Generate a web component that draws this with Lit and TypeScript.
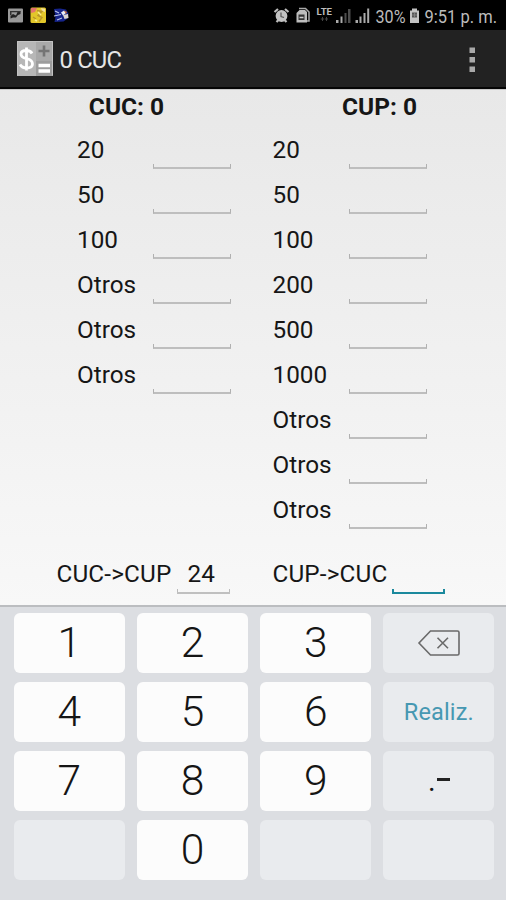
import { LitElement, html, css } from "lit";
import { customElement, property } from "lit/decorators.js";

@customElement("status-bar")
class StatusBar extends LitElement {
  static styles = css`
    :host { display: flex; height: 30px; background: #000; }
    svg { display: block; }
    text { font-family: Roboto, sans-serif; font-size: 18px; fill: #bcbcbc; }
    .lte { font-size: 8.5px; font-weight: 700; }
  `;
  render() {
    return html`<svg width="506" height="30" viewBox="0 0 506 30">
      <g>
        <rect x="8" y="8.500" width="15" height="14" rx="1" fill="#999"/>
        <path d="M10.500 18.500V16l2.500-2 3 1.500 1.500-3.500 3-1V14l-2.500 1-2 2.500h-3z" fill="#222"/>
        <path d="M10 11h10.500v1.300H11.500v3H10z" fill="#333"/>
      </g>
      <g>
        <rect x="30.500" y="7.500" width="15.500" height="15.500" rx="1.500" fill="#e2c72a"/>
        <path d="M31 8h6l-2 4-4 1z" fill="#e4746c"/>
        <path d="M41 8l4 1v3l-3-1z" fill="#f1dfa0"/>
        <path d="M37 10.500l5 1-4 4 4 2-3 4M33 17l3 2" fill="none" stroke="#b8962a" stroke-width="1.400"/>
        <path d="M38 12l3 3M35 20l2 1" stroke="#f7ef8c" stroke-width="1.500"/>
      </g>
      <g>
        <path d="M54 9l6-.5 6 1 2.500 4-1 5-4 3-9 .5 1-5z" fill="#16248a"/>
        <path d="M55 11l4 2M54 16l7-1.500M57 20l5-2" stroke="#b9c4ea" stroke-width="1.200"/>
        <path d="M61 12.500l3-2 2 2.500-3 2.500z" fill="#e9eef9"/>
        <path d="M64 10.500l3 1.500-1 2z" fill="#d67839"/>
        <path d="M63 15l5-1 .5 4-4 1z" fill="#dbd5cf"/>
      </g>
      <g fill="none" stroke="#bcbcbc">
        <circle cx="281.500" cy="16" r="5.900" fill="#c2c2c2" stroke="none"/>
        <path d="M274.500 12l3.500-3M285 9l3.500 3M276.500 22l2-2M286.500 22l-2-2" stroke-width="2.200"/>
        <path d="M281 12.500v4l3 1" stroke="#555" stroke-width="1.200"/>
      </g>
      <g>
        <path d="M299 8.500h6.500l3.500 3.500v9h-2" fill="none" stroke="#aaa" stroke-width="1.500"/>
        <path d="M296.500 13l3-3h5.500l2 2v10.500h-10.500z" fill="#bdbdbd"/>
        <path d="M298.500 14.500h6v5.500h-6z" fill="#333"/>
        <path d="M299.500 17.500h4" stroke="#ccc" stroke-width="1.500"/>
      </g>
      <text class="lte" x="316.500" y="14.500" textLength="15.500" lengthAdjust="spacingAndGlyphs">LTE</text>
      <path d="M322.500 17v4M320.800 19h3.400M326.500 17v4M325 19h3" stroke="#444" stroke-width="1"/>
      <g>
        <path d="M336 20h2.500v3h-2.500zM340.500 16.500h2v6.500h-2z" fill="#aaa"/>
        <path d="M344.500 13h2v10h-2zM348 9h2.500v14h-2.500z" fill="#4c4c4c"/>
        <path d="M355.500 20h2.500v3h-2.500zM359.500 16.500h2v6.500h-2zM363.500 13h2v10h-2zM367.200 8.500h2v14.500h-2z" fill="#aaa"/>
      </g>
      <text x="375.500" y="22.500" textLength="30" lengthAdjust="spacingAndGlyphs">30%</text>
      <g>
        <path d="M412 8.500h5v2h2v12.500h-9v-12.500h2z" fill="#c2c2c2"/>
        <path d="M412 12.500h5v5h-5z" fill="#555"/>
        <path d="M412 15h5M414.500 12.500v5" stroke="#888" stroke-width=".8"/>
      </g>
      <text x="424.500" y="22.500" textLength="72.500" lengthAdjust="spacingAndGlyphs">9:51 p. m.</text>
    </svg>`;
  }
}

@customElement("amount-field")
class AmountField extends LitElement {
  @property() label = "";
  static styles = css`
    :host { display: flex; height: 45px; }
    .label { width: 76px; line-height: 43px; white-space: nowrap; }
    .field {
      box-sizing: border-box; width: 78px; height: 5px; margin-top: 36px;
      border: 1px solid #b0b0b0; border-top: 0; border-bottom: 2px solid #bebebe;
    }
  `;
  render() {
    return html`<span class="label">${this.label}</span><span class="field"></span>`;
  }
}

@customElement("num-pad")
class NumPad extends LitElement {
  static styles = css`
    :host {
      box-sizing: border-box; display: grid; height: 295px;
      grid-template-columns: repeat(4, 111px); grid-auto-rows: 60px;
      column-gap: 12.200px; row-gap: 9px; padding: 6px 0 0 13.800px;
      border-top: 2px solid #bbbdc0; background: #dcdee2; align-content: start;
    }
    .key {
      display: flex; align-items: center; justify-content: center;
      border-radius: 6px; background: #fcfcfc; color: #151515;
      font-size: 42.500px; font-weight: 300; line-height: 60px;
    }
    .soft { background: #e9ebee; }
    .done { color: #4698b2; font-size: 23.500px; font-weight: 400; letter-spacing: .15px; }
    .signs { font-size: 29px; font-weight: 400; }
    .dash { width: 13px; height: 2.500px; margin: 0 0 3px 1px; background: #222; }
  `;
  private key(k: string) {
    if (k === "del")
      return html`<span class="key soft"><svg width="44" height="30" viewBox="0 0 44 30" fill="none" stroke="#6a6a6a" stroke-width="1.600">
        <path d="M13.500 3H40.500Q42 3 42 4.500V25.500Q42 27 40.500 27H13.500L2 15z"/><path d="M20.500 9.800l10.500 10.500M31 9.800L20.500 20.300"/></svg></span>`;
    if (k === ".-") return html`<span class="key soft signs"><span>.</span><span class="dash"></span></span>`;
    if (k === "Realiz.") return html`<span class="key soft done">${k}</span>`;
    return html`<span class="key ${k ? "" : "soft"}">${k}</span>`;
  }
  render() {
    return ["1", "2", "3", "del", "4", "5", "6", "Realiz.", "7", "8", "9", ".-", "", "0", "", ""].map((k) => this.key(k));
  }
}

@customElement("app-root")
class AppRoot extends LitElement {
  static styles = css`
    :host {
      display: flex; flex-direction: column; height: 900px; overflow: hidden;
      font-family: Roboto, sans-serif; font-size: 24.300px; color: #161616;
    }
    .bar {
      box-sizing: border-box; display: flex; align-items: center; height: 59px;
      padding: 0 27px 0 17px; background: #222; border-bottom: 2px solid #050505;
      color: #e6e6e6; font-size: 23.800px;
    }
    .title { margin-left: 6.500px; flex: 1; line-height: 59px; padding-top: 3px; letter-spacing: -.8px; }
    .main {
      box-sizing: border-box; height: 516px; border-top: 1px solid #c8c8c8;
      background: linear-gradient(#e8e8e8, #f8f8f8);
    }
    .cols { display: grid; grid-template-columns: 253px 253px; height: 452px; align-items: start; }
    h2 { margin: 0 0 4px; font-size: 24.500px; font-weight: 700; line-height: 34px; text-align: center; }
    .left { padding-left: 77px; }
    .right { padding-left: 19.500px; }
    .rates { display: flex; height: 63px; }
    .rate { display: flex; line-height: 64px; white-space: nowrap; letter-spacing: .15px; }
    .first { width: 216px; padding-left: 56.500px; }
    .value {
      box-sizing: border-box; width: 53px; height: 5px; margin: 47px 0 0 5px;
      border: 1px solid #bbb; border-top: 0; border-bottom-width: 2px;
    }
    .filled { height: 30px; margin: 22px 0 0 6px; border: 0; line-height: 20px; padding-left: 10px;
      background: linear-gradient(#c0c0c0, #c0c0c0) 0 28px / 100% 2px no-repeat,
        linear-gradient(#bbb, #bbb) 0 100% / 1px 5px no-repeat,
        linear-gradient(#bbb, #bbb) 100% 100% / 1px 5px no-repeat; }
    .focus { border: 2px solid #1b899d; border-top: 0; }
  `;
  render() {
    return html`
      <status-bar></status-bar>
      <div class="bar">
        <svg width="36" height="35" viewBox="0 0 36 35">
          <rect width="36" height="35" fill="#a9a9a9"/>
          <path d="M0 0h19v35H0z" fill="#b7b7b7"/>
          <path d="M19 20h17v15H19z" fill="#9d9d9d"/>
          <path d="M.5 34.500V.5h35v34" fill="none" stroke="#c4c4c4"/>
          <path d="M15 12.500Q13.500 9.500 9.500 9.500 4 9.500 4 13q0 3.500 5.500 4.500Q15.500 19 15.500 23q0 4-6 4Q5 27 3 23.500M9.500 6.500v23" fill="none" stroke="#fff" stroke-width="2.800"/>
          <path d="M27 4.500v11M21.500 10h11" stroke="#747474" stroke-width="2.600"/>
          <path d="M21.500 24.500h11.500M21.500 30h11.500" stroke="#fff" stroke-width="3.300"/>
        </svg>
        <span class="title">0 CUC</span>
        <svg width="14" height="28" viewBox="0 0 14 28"><path d="M4.500 2.500h5.500V8H4.500zM4.500 12h5.500v5.500H4.500zM4.500 21.500h5.500V27H4.500z" fill="#a9a9a9"/></svg>
      </div>
      <div class="main">
        <div class="cols">
          <section><h2>CUC: 0</h2>
            <div class="left">${["20", "50", "100", "Otros", "Otros", "Otros"].map((l) => html`<amount-field .label=${l}></amount-field>`)}</div>
          </section>
          <section><h2>CUP: 0</h2>
            <div class="right">${["20", "50", "100", "200", "500", "1000", "Otros", "Otros", "Otros"].map((l) => html`<amount-field .label=${l}></amount-field>`)}</div>
          </section>
        </div>
        <div class="rates">
          <div class="rate first">CUC-&gt;CUP<span class="value filled">24</span></div>
          <div class="rate">CUP-&gt;CUC<span class="value focus"></span></div>
        </div>
      </div>
      <num-pad></num-pad>
    `;
  }
}
